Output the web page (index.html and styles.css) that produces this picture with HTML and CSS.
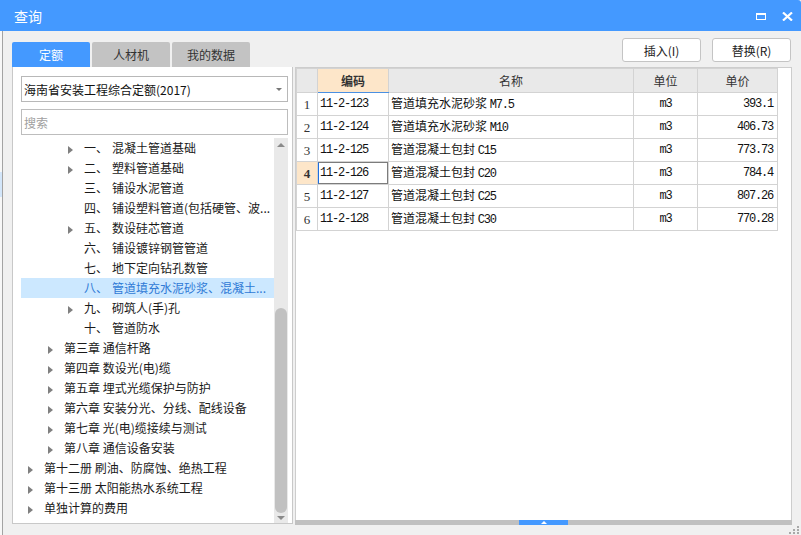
FILE: index.html
```html
<!DOCTYPE html>
<html lang="zh-CN">
<head>
<meta charset="utf-8">
<title>查询</title>
<link rel="stylesheet" href="styles.css">
</head>
<body>
<div class="titlebar">
  <span class="title">查询</span>
  <div class="win-btns">
    <span class="max-icon"></span>
    <svg class="close-icon" width="11" height="9" viewBox="0 0 11 9"><path d="M1 0.5 L10 8.5 M10 0.5 L1 8.5" stroke="#fff" stroke-width="2.2" fill="none"/></svg>
  </div>
</div>
<div class="content">
  <div class="toolbar">
    <div class="tabs">
      <div class="tab active">定额</div>
      <div class="tab">人材机</div>
      <div class="tab">我的数据</div>
    </div>
    <div class="actions">
      <button class="btn">插入(I)</button>
      <button class="btn">替换(R)</button>
    </div>
  </div>
  <div class="main">
    <div class="left">
      <div class="select"><span>海南省安装工程综合定额(2017)</span><span class="caret"></span></div>
      <div class="search">搜索</div>
      <div class="tree">
        <ul class="tree-list">
          <li class="node l3"><span class="arrow"></span><span class="num">一、</span>混凝土管道基础</li>
          <li class="node l3"><span class="arrow"></span><span class="num">二、</span>塑料管道基础</li>
          <li class="node l3"><span class="arrow none"></span><span class="num">三、</span>铺设水泥管道</li>
          <li class="node l3"><span class="arrow none"></span><span class="num">四、</span>铺设塑料管道(包括硬管、波...</li>
          <li class="node l3"><span class="arrow"></span><span class="num">五、</span>数设硅芯管道</li>
          <li class="node l3"><span class="arrow none"></span><span class="num">六、</span>铺设镀锌钢管管道</li>
          <li class="node l3"><span class="arrow none"></span><span class="num">七、</span>地下定向钻孔数管</li>
          <li class="node l3 selected"><span class="arrow none"></span><span class="num">八、</span>管道填充水泥砂浆、混凝土...</li>
          <li class="node l3"><span class="arrow"></span><span class="num">九、</span>砌筑人(手)孔</li>
          <li class="node l3"><span class="arrow none"></span><span class="num">十、</span>管道防水</li>
          <li class="node l2"><span class="arrow"></span>第三章 通信杆路</li>
          <li class="node l2"><span class="arrow"></span>第四章 数设光(电)缆</li>
          <li class="node l2"><span class="arrow"></span>第五章 埋式光缆保护与防护</li>
          <li class="node l2"><span class="arrow"></span>第六章 安装分光、分线、配线设备</li>
          <li class="node l2"><span class="arrow"></span>第七章 光(电)缆接续与测试</li>
          <li class="node l2"><span class="arrow"></span>第八章 通信设备安装</li>
          <li class="node l1"><span class="arrow"></span>第十二册 刷油、防腐蚀、绝热工程</li>
          <li class="node l1"><span class="arrow"></span>第十三册 太阳能热水系统工程</li>
          <li class="node l1"><span class="arrow"></span>单独计算的费用</li>
        </ul>
        <div class="vscroll">
          <div class="sb-up"><span class="tri-up"></span></div>
          <div class="sb-track"><div class="sb-thumb"></div></div>
          <div class="sb-down"><span class="tri-down"></span></div>
        </div>
      </div>
    </div>
    <div class="right">
      <div class="grid-wrap">
        <table class="grid">
          <colgroup>
            <col class="c-no"><col class="c-code"><col class="c-name"><col class="c-unit"><col class="c-price">
          </colgroup>
          <thead>
            <tr><th></th><th class="active-col">编码</th><th>名称</th><th>单位</th><th>单价</th></tr>
          </thead>
          <tbody>
            <tr><td class="no">1</td><td class="code">11-2-123</td><td class="name">管道填充水泥砂浆 <span class="lat">M7.5</span></td><td class="unit">m3</td><td class="price">393.1</td></tr>
            <tr><td class="no">2</td><td class="code">11-2-124</td><td class="name">管道填充水泥砂浆 <span class="lat">M10</span></td><td class="unit">m3</td><td class="price">406.73</td></tr>
            <tr><td class="no">3</td><td class="code">11-2-125</td><td class="name">管道混凝土包封 <span class="lat">C15</span></td><td class="unit">m3</td><td class="price">773.73</td></tr>
            <tr><td class="no cur">4</td><td class="code focus">11-2-126</td><td class="name">管道混凝土包封 <span class="lat">C20</span></td><td class="unit">m3</td><td class="price">784.4</td></tr>
            <tr><td class="no">5</td><td class="code">11-2-127</td><td class="name">管道混凝土包封 <span class="lat">C25</span></td><td class="unit">m3</td><td class="price">807.26</td></tr>
            <tr><td class="no">6</td><td class="code">11-2-128</td><td class="name">管道混凝土包封 <span class="lat">C30</span></td><td class="unit">m3</td><td class="price">770.28</td></tr>
          </tbody>
        </table>
      </div>
      <div class="hbar"><div class="handle"><span class="tri-up small"></span></div></div>
    </div>
  </div>
  <svg class="grip" width="10" height="9" viewBox="0 0 10 9">
    <rect x="8" y="0" width="2" height="2" fill="#a9a9a9"/>
    <rect x="4" y="3" width="2" height="2" fill="#a9a9a9"/>
    <rect x="8" y="3" width="2" height="2" fill="#a9a9a9"/>
    <rect x="0" y="6" width="2" height="2" fill="#a9a9a9"/>
    <rect x="4" y="6" width="2" height="2" fill="#a9a9a9"/>
    <rect x="8" y="6" width="2" height="2" fill="#a9a9a9"/>
  </svg>
</div>
</body>
</html>
```

FILE: styles.css
```css
* { box-sizing: border-box; }
html, body { margin: 0; padding: 0; }
body {
  width: 801px;
  height: 535px;
  overflow: hidden;
  font-family: "Noto Sans CJK SC", "Microsoft YaHei", sans-serif;
  font-size: 12px;
  color: #222;
  background: #f7f7f7 linear-gradient(#d3e6fa, #d3e6fa) 0 172px / 2px 25px no-repeat;
}

/* title bar */
.titlebar {
  height: 31px;
  background: #4499ff;
  color: #fff;
  display: flex;
  align-items: center;
  justify-content: space-between;
  padding: 0 8px 0 14px;
  border-top-right-radius: 3px;
}
.title { font-size: 14px; }
.win-btns { display: flex; align-items: center; gap: 16px; padding-top: 1px; }
.max-icon {
  width: 10px;
  height: 7px;
  border: 1.5px solid #fff;
  border-top-width: 2px;
}
.close-icon { display: block; }

/* content */
.content {
  position: relative;
  margin-left: 2px;
  height: 504px;
  border-left: 1px solid #a3a3a3;
  background: #f0f0f0;
}
.toolbar {
  height: 36px;
  padding: 7px 10px 0 9px;
  display: flex;
  justify-content: space-between;
  align-items: flex-start;
}
.tabs { display: flex; gap: 2px; margin-top: 4px; }
.tab {
  width: 78px;
  height: 25px;
  background: #c3c3c3;
  color: #333;
  border-radius: 2px 2px 0 0;
  display: flex;
  align-items: center;
  justify-content: center;
  font-size: 12px;
}
.tab.active { background: #4499ff; color: #fff; }
.actions { display: flex; gap: 11px; }
.btn {
  width: 79px;
  height: 24px;
  background: #fff;
  border: 1px solid #c4c4c4;
  border-radius: 3px;
  font-family: inherit;
  font-size: 12px;
  color: #222;
  padding: 0;
}

.main {
  display: flex;
  gap: 2px;
  padding: 0 9px;
  height: 458px;
}

/* left panel */
.left {
  width: 281px;
  height: 457px;
  background: #fff;
  border: 1px solid #c8c8c8;
  border-top: 0;
  padding: 9px 4px 0 8px;
  display: flex;
  flex-direction: column;
}
.select {
  height: 26px;
  border: 1px solid #b8b8b8;
  display: flex;
  align-items: center;
  justify-content: space-between;
  padding: 0 5px 0 2px;
  font-size: 12px;
  color: #111;
}
.caret {
  width: 0; height: 0;
  border-left: 3px solid transparent;
  border-right: 3px solid transparent;
  border-top: 3px solid #777;
}
.search {
  margin-top: 7px;
  height: 26px;
  border: 1px solid #bdbdbd;
  display: flex;
  align-items: center;
  padding-left: 2px;
  color: #a0a0a0;
  font-size: 12px;
}
.tree {
  margin-top: 3px;
  flex: 1;
  display: flex;
  min-height: 0;
}
.tree-list {
  list-style: none;
  margin: 0;
  padding: 0;
  flex: 1;
  min-width: 0;
}
.node {
  height: 20px;
  line-height: 20px;
  white-space: nowrap;
  color: #1a1a1a;
  font-size: 12px;
}
.node.l1 { padding-left: 7px; }
.node.l2 { padding-left: 27px; }
.node.l3 { padding-left: 47px; }
.node.selected { background: #cce8ff; color: #2f7ad6; }
.arrow {
  display: inline-block;
  width: 16px;
  height: 8px;
  vertical-align: -0.5px;
  position: relative;
}
.arrow::before {
  content: "";
  position: absolute;
  left: 0; top: 0;
  border-left: 5px solid #7f7f7f;
  border-top: 4px solid transparent;
  border-bottom: 4px solid transparent;
}
.arrow.none::before { display: none; }
.num { display: inline-block; width: 28px; }

.vscroll {
  width: 14px;
  background: #e9e9e9;
  display: flex;
  flex-direction: column;
}
.sb-up { height: 12px; display: flex; justify-content: center; align-items: center; padding-top: 1px; }
.sb-down { height: 10px; display: flex; justify-content: center; align-items: center; }
.sb-track { flex: 1; padding: 0 1px; }
.sb-thumb {
  margin-top: 158px;
  height: 205px;
  width: 12px;
  border-radius: 6px;
  background: #c1c1c1;
}
.tri-up {
  width: 0; height: 0;
  border-left: 4px solid transparent;
  border-right: 4px solid transparent;
  border-bottom: 4px solid #8a8a8a;
}
.tri-down {
  width: 0; height: 0;
  border-left: 4px solid transparent;
  border-right: 4px solid transparent;
  border-top: 4px solid #8a8a8a;
}

/* right panel */
.right {
  width: 497px;
  height: 458px;
  background: #fff;
  border: 1px solid #cdcdcd;
  border-bottom: 0;
  display: flex;
  flex-direction: column;
}
.grid-wrap { flex: 1; }
.grid {
  border-collapse: collapse;
  table-layout: fixed;
  width: 481px;
  font-size: 12px;
  line-height: 15px;
}
.c-no { width: 21px; }
.c-code { width: 71px; }
.c-name { width: 245px; }
.c-unit { width: 64px; }
.c-price { width: 80px; }
.grid th, .grid td {
  border: 1px solid #d3d3d3;
  padding: 0;
  white-space: nowrap;
  overflow: hidden;
}
.grid th {
  height: 24px;
  background: #e9e9e9;
  font-weight: normal;
  color: #333;
  text-align: center;
}
.grid th.active-col {
  background: #fde6c9;
  font-weight: bold;
  border-bottom: 1px solid #4a90e2;
}
.grid td {
  height: 23px;
  color: #111;
}
.grid td.no {
  text-align: center;
  font-family: "Liberation Serif", serif;
  font-size: 13px;
  color: #333;
}
.grid td.no.cur { background: #fde6c9; font-weight: bold; }
.grid td.code {
  font-family: "Liberation Mono", monospace;
  letter-spacing: -1.2px;
  padding-left: 2px;
}
.grid td.code.focus { position: relative; }
.grid td.code.focus::after {
  content: "";
  position: absolute;
  inset: -1px -1px -1px -1px;
  border: 2px solid #7c7c7c;
  border-left: 2px solid #1e6fe0;
}
.grid td.name { padding-left: 2px; }
.lat {
  font-family: "Liberation Mono", monospace;
  letter-spacing: -1.2px;
}
.grid td.unit {
  text-align: center;
  font-family: "Liberation Mono", monospace;
  letter-spacing: -1.2px;
}
.grid td.price {
  text-align: right;
  padding-right: 4px;
  font-family: "Liberation Mono", monospace;
  letter-spacing: -1.2px;
}

.hbar {
  height: 5px;
  margin: 0 -1px;
  background: #c0c0c0;
  display: flex;
  justify-content: center;
}
.handle {
  width: 49px;
  height: 5px;
  background: #4499ff;
  display: flex;
  justify-content: center;
  align-items: center;
}
.tri-up.small {
  border-left-width: 3px;
  border-right-width: 3px;
  border-bottom-width: 3px;
  border-bottom-color: #fff;
}

.grip {
  position: absolute;
  right: 2px;
  bottom: 0;
}
```
